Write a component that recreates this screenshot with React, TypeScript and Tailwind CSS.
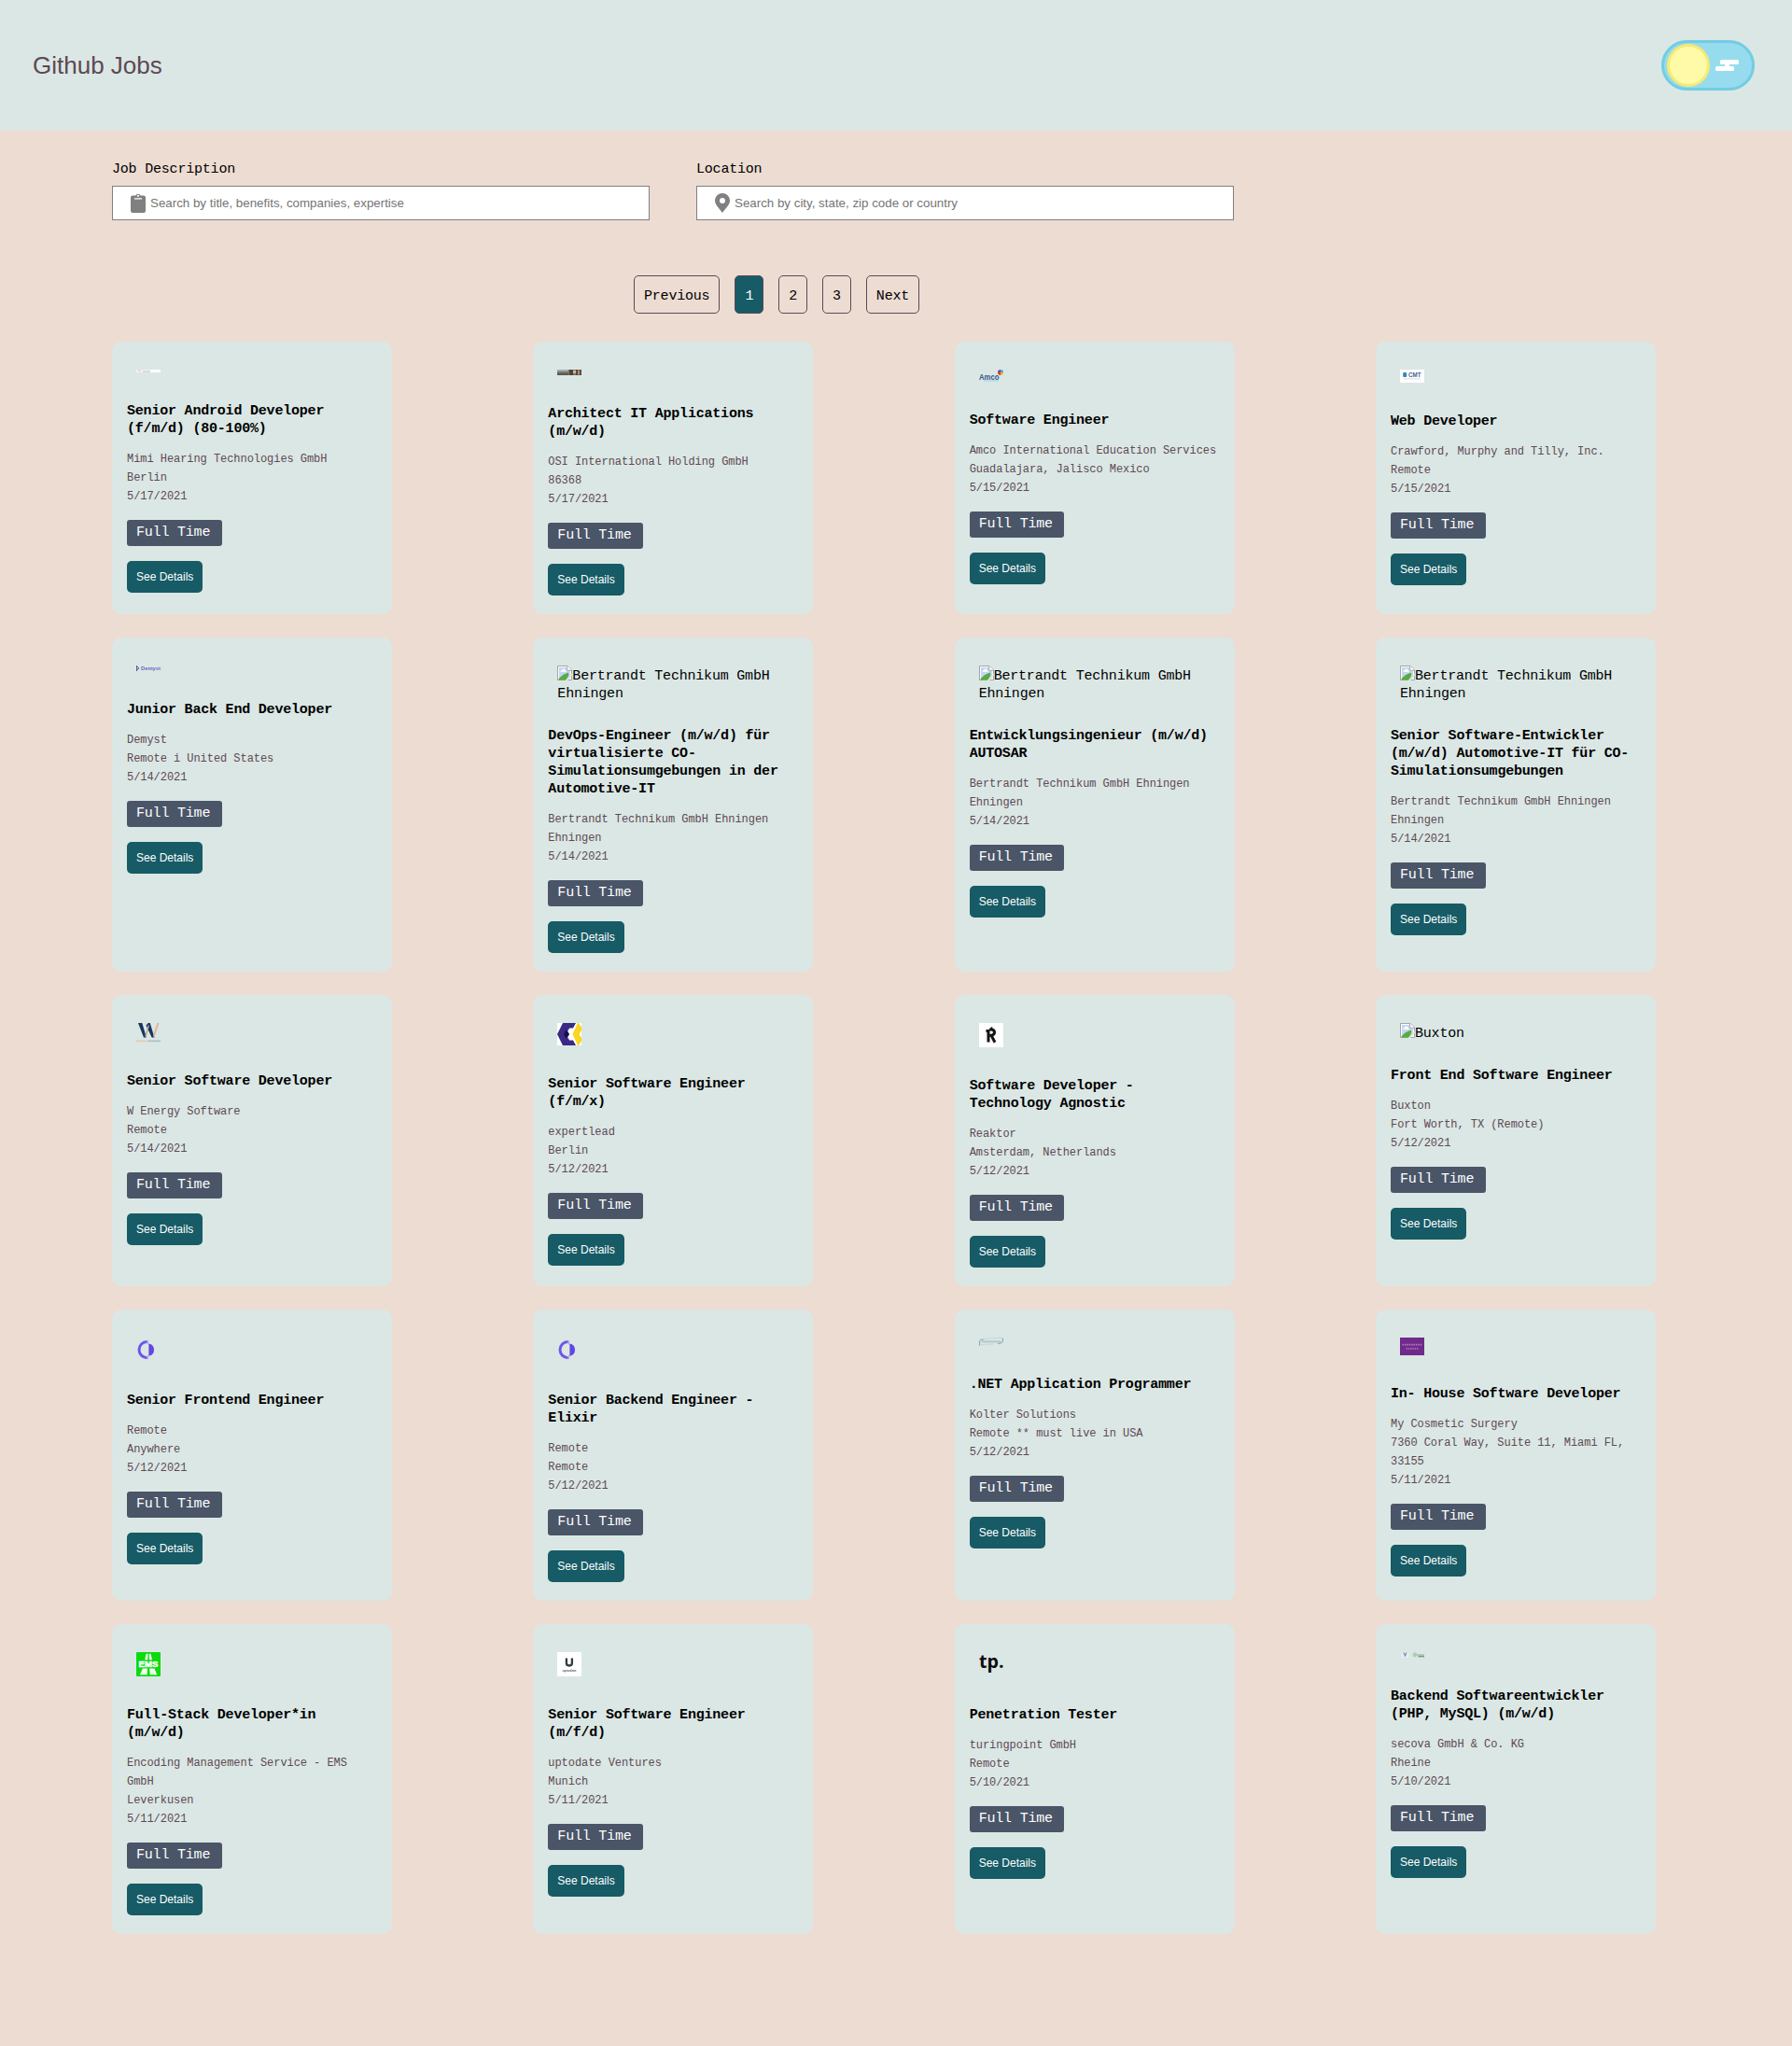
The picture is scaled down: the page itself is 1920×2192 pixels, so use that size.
import type { ReactNode } from "react";

type Job = {
  logo: ReactNode;
  title: string;
  company: string;
  place: string;
  date: string;
};

/* ---------- company logos, all 26px wide ---------- */

function Logo({ h, children }: { h: number; children: ReactNode }) {
  return (
    <svg width="26" height={h} viewBox={`0 0 26 ${h}`} className="block overflow-visible">
      {children}
    </svg>
  );
}

const mimiLogo = (
  <Logo h={3}>
    <rect width="26" height="3" fill="#f1f0f0" />
    <rect x="15" width="11" height="3" fill="#ffffff" />
    <rect x="2" width="3" height="2" fill="#dfdcdf" />
    <rect x="7" y="1" width="8" height="2" fill="#dcd9db" />
  </Logo>
);

const osiLogo = (
  <Logo h={6}>
    <rect width="26" height="6" fill="#77736b" />
    <rect width="12" height="2" fill="#a3a8a8" />
    <rect y="4" width="12" height="2" fill="#5c5a50" />
    <rect x="13" width="4" height="6" fill="#514436" />
    <rect x="17" y="1" width="3" height="3" fill="#c3b9ab" />
    <rect x="20" width="2" height="6" fill="#5e4a3a" />
    <rect x="22" y="1" width="2" height="4" fill="#b39063" />
    <rect x="24" width="2" height="6" fill="#5a5148" />
  </Logo>
);

const amcoLogo = (
  <Logo h={13}>
    <text x="0" y="10.6" fontSize="9.4" fontWeight="700" textLength="21.5" lengthAdjust="spacingAndGlyphs" fontFamily="Liberation Sans" fill="#31568c">
      Amco
    </text>
    <rect x="5" y="11.2" width="16" height="1.6" fill="#b5dbe6" />
    <path d="M23 3V0A3 3 0 0 1 26 3Z" fill="#3fa9dd" />
    <path d="M23 3H20A3 3 0 0 1 23 0Z" fill="#8f3f8f" />
    <path d="M23 3V6A3 3 0 0 1 20 3Z" fill="#e2373f" />
    <path d="M23 3H26A3 3 0 0 1 23 6Z" fill="#f6b51e" />
  </Logo>
);

const cmtLogo = (
  <Logo h={14}>
    <rect width="26" height="14" fill="#ffffff" />
    <rect x="3.2" y="3" width="4" height="5" rx="1" fill="#3b87b5" />
    <text x="9" y="8" fontSize="7" fontWeight="700" textLength="13.5" lengthAdjust="spacingAndGlyphs" fontFamily="Liberation Sans" fill="#3f6291">
      CMT
    </text>
    <rect x="3.5" y="9.4" width="19" height="1" fill="#dcdfe4" />
  </Logo>
);

const demystLogo = (
  <Logo h={6}>
    <path d="M0.5 0V6M1 1.3L3 3L1 4.7" stroke="#5a55a8" strokeWidth="1" fill="none" />
    <text x="5" y="4.9" fontSize="6" fontWeight="700" textLength="21" lengthAdjust="spacingAndGlyphs" fontFamily="Liberation Sans" fill="#6f69ba">
      Demyst
    </text>
  </Logo>
);

const wEnergyLogo = (
  <Logo h={21}>
    <path d="M2 0H6.3L10.8 15.5H8Z" fill="#15365f" />
    <path d="M10.5 2.5L12.8 0H14.8L19.4 15.5H16.6Z" fill="#15365f" />
    <path d="M9.3 14L13 1.2L13.8 3.6L10.6 15.5Z" fill="#b9a79b" />
    <path d="M18 13.5L22.6 0H24.4L19.2 15.5Z" fill="#e6ae8b" />
    <rect x="0" y="18.4" width="11" height="1.8" fill="#e6c8b6" />
    <rect x="12" y="18.4" width="14" height="1.8" fill="#b3c1c7" />
  </Logo>
);

const expertleadLogo = (
  <Logo h={24}>
    <rect width="26" height="24" fill="#ffffff" />
    <path d="M6 0H20L17 5.5L13 5.5L10 12L13 18.5H17L20 24H6L0 12Z" fill="#3a2a86" />
    <path d="M7 12L9.5 7.5L14 12L9.5 16.5Z" fill="#1c0c4e" />
    <path d="M11 7L13.5 10H17L15.5 12L17 14H13.5L11 17L13 12Z" fill="#ffffff" />
    <path d="M22 0H23L26 4.5V8L23.5 12L26 16V19.5L23 24H22L16.5 12Z" fill="#fdd41f" />
  </Logo>
);

const reaktorLogo = (
  <Logo h={26}>
    <rect width="26" height="26" fill="#ffffff" />
    <path
      d="M7.5 8.5H10V20.5M10 13.2H13.5Q16.5 12.6 16.5 10Q16.5 7 13 7L11.2 7M13.2 13.5L17 20.8"
      fill="none"
      stroke="#151515"
      strokeWidth="3"
    />
    <path d="M12 7.5L14 4.5" stroke="#151515" strokeWidth="1.6" />
  </Logo>
);

const remoteLogo = (
  <Logo h={26}>
    <path d="M11.6 4.5A8.6 8.6 0 0 0 11.6 21.7" fill="none" stroke="#6f55e8" strokeWidth="3" />
    <path d="M13.4 6.4A6.8 6.8 0 0 1 13.4 19.8Z" fill="#6246e4" />
    <path d="M12.6 3.2V7.4M12.6 18.8V23" stroke="#a596ee" strokeWidth="0.9" />
  </Logo>
);

const kolterLogo = (
  <Logo h={9}>
    <path d="M0.6 8.5V3.5Q1 2 5 2M25.4 0.5V4.5Q25 6 20 6.5" fill="none" stroke="#78a5bb" strokeWidth="1" />
    <path d="M4 1.8Q14 0.2 25 0.6M1 8Q6 6.9 16 7" fill="none" stroke="#bcd2d9" strokeWidth="0.8" />
    <rect x="2.5" y="3.5" width="21" height="1.8" fill="#b6c3c5" />
  </Logo>
);

const cosmeticLogo = (
  <Logo h={19}>
    <rect width="26" height="19" fill="#702a8c" />
    <path d="M2.500 7.7H23.5" stroke="#a87abb" strokeWidth="1.8" strokeDasharray="1.6 0.8" />
    <path d="M6.5 11.8H19.5" stroke="#a070b5" strokeWidth="1.8" strokeDasharray="1.5 0.8" />
  </Logo>
);

const emsLogo = (
  <Logo h={26}>
    <rect width="26" height="26" rx="1" fill="#0ddb10" />
    <path d="M10.6 1.8H12.5L12.3 8.2H9.2ZM13.7 1.8H15.5L17 8.2H13.9Z" fill="#f2fff2" />
    <text x="2.6" y="16" fontSize="8.4" fontWeight="700" textLength="20.8" lengthAdjust="spacingAndGlyphs" fontFamily="Liberation Sans" fill="#ffffff" stroke="#ffffff" strokeWidth="0.5">
      EMS
    </text>
    <path d="M6.8 17.4H12L11.6 24.2H4ZM14.2 17.4H19.4L22.2 24.2H14.7Z" fill="#f4fff4" />
  </Logo>
);

const uptodateLogo = (
  <Logo h={26}>
    <rect width="26" height="26" fill="#ffffff" />
    <path d="M9.9 6.4V11.8Q9.9 14.5 12.9 14.5Q15.9 14.5 15.9 11.8V6.4" fill="none" stroke="#2f3a44" strokeWidth="2.3" />
    <text x="5.4" y="20.8" fontSize="4" fontWeight="700" textLength="15.2" lengthAdjust="spacingAndGlyphs" fontFamily="Liberation Sans" fill="#63696f">
      uptodate
    </text>
  </Logo>
);

const turingpointLogo = (
  <Logo h={26}>
    <text x="0" y="17.4" fontSize="20" fontWeight="700" textLength="26.6" lengthAdjust="spacingAndGlyphs" fontFamily="Open Sans" fill="#0c0c0c">
      tp.
    </text>
  </Logo>
);

const secovaLogo = (
  <Logo h={6}>
    <rect x="1.5" y="0" width="8" height="6" fill="#e9edf1" />
    <path d="M4 0.5L5.5 4L7 0.5" fill="none" stroke="#6d8fbd" strokeWidth="1.2" />
    <circle cx="16" cy="2.8" r="2.4" fill="#a9cfae" />
    <rect x="18" y="2" width="8" height="2" fill="#b7cdb3" />
    <rect x="19.5" y="3.8" width="6.5" height="1.6" fill="#84948a" />
  </Logo>
);

/* Chrome-style missing picture followed by its alternative text */
function MissingImage({ alt, tall }: { alt: string; tall?: boolean }) {
  return (
    <div className={tall ? "h-[34px] w-[248px]" : "h-[15px] w-[248px]"}>
      <p className="relative top-[2px] text-[15px] leading-[19px] tracking-[-0.202px]">
        <svg width="16" height="16" viewBox="0 0 16 16" className="relative -top-[2px] inline-block align-top">
          <path d="M0.5 0.5H11L15.5 5V15.5H0.5Z" fill="#ffffff" stroke="#a3a3a3" />
          <path d="M2 2H10.3V5.7H14V14H2Z" fill="#c3d6f8" />
          <path d="M3.3 6.8Q3.3 5 5 5Q5.4 3.4 6.8 3.4Q8.4 3.4 8.6 5.2Q9.8 5.4 9.8 6.8Z" fill="#ffffff" />
          <path d="M1 15.5Q3 11.5 8.3 9L11.8 7.6Q13.5 10 9.6 15.5Z" fill="#5aac3c" />
          <path d="M8.6 15.9L15.9 8.6V11L11.2 15.9Z" fill="#dbe7e4" />
          <path d="M10.7 0.6V5.3H15.4" fill="#ffffff" stroke="#a3a3a3" />
        </svg>
        {alt}
      </p>
    </div>
  );
}

const bertrandt = <MissingImage alt="Bertrandt Technikum GmbH Ehningen" tall />;

const jobs: Job[] = [
  { logo: mimiLogo, title: "Senior Android Developer (f/m/d) (80-100%)", company: "Mimi Hearing Technologies GmbH", place: "Berlin", date: "5/17/2021" },
  { logo: osiLogo, title: "Architect IT Applications (m/w/d)", company: "OSI International Holding GmbH", place: "86368", date: "5/17/2021" },
  { logo: amcoLogo, title: "Software Engineer", company: "Amco International Education Services", place: "Guadalajara, Jalisco Mexico", date: "5/15/2021" },
  { logo: cmtLogo, title: "Web Developer", company: "Crawford, Murphy and Tilly, Inc.", place: "Remote", date: "5/15/2021" },
  { logo: demystLogo, title: "Junior Back End Developer", company: "Demyst", place: "Remote i United States", date: "5/14/2021" },
  { logo: bertrandt, title: "DevOps-Engineer (m/w/d) für virtualisierte CO-Simulationsumgebungen in der Automotive-IT", company: "Bertrandt Technikum GmbH Ehningen", place: "Ehningen", date: "5/14/2021" },
  { logo: bertrandt, title: "Entwicklungsingenieur (m/w/d) AUTOSAR", company: "Bertrandt Technikum GmbH Ehningen", place: "Ehningen", date: "5/14/2021" },
  { logo: bertrandt, title: "Senior Software-Entwickler (m/w/d) Automotive-IT für CO-Simulationsumgebungen", company: "Bertrandt Technikum GmbH Ehningen", place: "Ehningen", date: "5/14/2021" },
  { logo: wEnergyLogo, title: "Senior Software Developer", company: "W Energy Software", place: "Remote", date: "5/14/2021" },
  { logo: expertleadLogo, title: "Senior Software Engineer (f/m/x)", company: "expertlead", place: "Berlin", date: "5/12/2021" },
  { logo: reaktorLogo, title: "Software Developer - Technology Agnostic", company: "Reaktor", place: "Amsterdam, Netherlands", date: "5/12/2021" },
  { logo: <MissingImage alt="Buxton" />, title: "Front End Software Engineer", company: "Buxton", place: "Fort Worth, TX (Remote)", date: "5/12/2021" },
  { logo: remoteLogo, title: "Senior Frontend Engineer", company: "Remote", place: "Anywhere", date: "5/12/2021" },
  { logo: remoteLogo, title: "Senior Backend Engineer - Elixir", company: "Remote", place: "Remote", date: "5/12/2021" },
  { logo: kolterLogo, title: ".NET Application Programmer", company: "Kolter Solutions", place: "Remote ** must live in USA", date: "5/12/2021" },
  { logo: cosmeticLogo, title: "In- House Software Developer", company: "My Cosmetic Surgery", place: "7360 Coral Way, Suite 11, Miami FL, 33155", date: "5/11/2021" },
  { logo: emsLogo, title: "Full-Stack Developer*in (m/w/d)", company: "Encoding Management Service - EMS GmbH", place: "Leverkusen", date: "5/11/2021" },
  { logo: uptodateLogo, title: "Senior Software Engineer (m/f/d)", company: "uptodate Ventures", place: "Munich", date: "5/11/2021" },
  { logo: turingpointLogo, title: "Penetration Tester", company: "turingpoint GmbH", place: "Remote", date: "5/10/2021" },
  { logo: secovaLogo, title: "Backend Softwareentwickler (PHP, MySQL) (m/w/d)", company: "secova GmbH & Co. KG", place: "Rheine", date: "5/10/2021" },
];

function JobCard({ job }: { job: Job }) {
  return (
    <article className="flex flex-col items-start rounded-[10px] bg-[#dbe7e4] px-4 pt-[30px] pb-5">
      <div className="ml-2.5">{job.logo}</div>
      <h2 className="mt-8 text-[15px] leading-[19px] font-bold tracking-[-0.202px] text-black">{job.title}</h2>
      <div className="mt-[13px] text-[12px] leading-5 tracking-[-0.054px] text-[#5d4954]">
        <p>{job.company}</p>
        <p>{job.place}</p>
        <p>{job.date}</p>
      </div>
      <span className="mt-[15px] h-7 w-[101.6px] rounded-[3px] bg-[#4a5568] pl-2.5 text-[15px] leading-[28px] tracking-[-0.202px] text-white">
        Full Time
      </span>
      <button className="mt-4 h-[34px] w-[81.4px] rounded-[5px] bg-[#165b65] font-['Liberation_Sans',sans-serif] text-[12px] whitespace-nowrap text-white">
        See Details
      </button>
    </article>
  );
}

function SearchField({ label, placeholder, icon }: { label: string; placeholder: string; icon: ReactNode }) {
  return (
    <label className="flex w-[576px] flex-col">
      <span className="pt-px text-[15px] leading-[19px] tracking-[-0.202px] text-black">{label}</span>
      <span className="mt-2 flex h-[37px] items-center border border-[#808080] bg-white pl-[19px]">
        {icon}
        <input
          className="ml-[5px] h-full flex-1 font-['Liberation_Sans',sans-serif] text-[13.333px] outline-none placeholder:text-[#757575]"
          placeholder={placeholder}
        />
      </span>
    </label>
  );
}

const clipboardIcon = (
  <svg width="16" height="21" viewBox="0 0 16 21">
    <path
      fillRule="evenodd"
      fill="#808080"
      d="M2 2.6H5.4A2.7 2.7 0 0 1 10.6 2.6H14A2 2 0 0 1 16 4.6V19A2 2 0 0 1 14 21H2A2 2 0 0 1 0 19V4.6A2 2 0 0 1 2 2.6ZM8 1.7A1.1 1.1 0 1 0 8 3.9A1.1 1.1 0 1 0 8 1.7ZM4 5.2V6.6H12V5.2Z"
    />
  </svg>
);

const pinIcon = (
  <svg width="16" height="21" viewBox="0 0 16 21">
    <path
      fillRule="evenodd"
      fill="#808080"
      d="M8 0A8 8 0 0 1 16 8C16 12 12 15.5 8 21C4 15.5 0 12 0 8A8 8 0 0 1 8 0ZM8 5A3 3 0 1 0 8 11A3 3 0 1 0 8 5Z"
    />
  </svg>
);

function ThemeToggle() {
  return (
    <button aria-label="Toggle theme" className="flex h-[54px] w-[100px] items-center rounded-full border-[3px] border-[#72cce3] bg-[#96dcee] pl-[3px]">
      <span className="h-[46px] w-[46px] rounded-full border-[3px] border-[#f5eb71] bg-[#fffaa8]" />
      <svg width="25" height="12" viewBox="0 0 25 12" className="ml-1.5" fill="#ffffff">
        <rect x="5" y="0" width="20" height="5" rx="1.5" />
        <rect x="10" y="4" width="5" height="4" />
        <rect x="0" y="7" width="20" height="5" rx="1.5" />
      </svg>
    </button>
  );
}

const pages = ["Previous", "1", "2", "3", "Next"];

export default function App() {
  return (
    <div className="min-h-[2192px] w-[1920px] bg-[#eddcd2] font-['Liberation_Mono',monospace]">
      <header className="flex h-[140px] items-center justify-between bg-[#dbe7e4] pr-10 pl-[35px]">
        <h1 className="font-['Liberation_Sans',sans-serif] text-[26px] leading-none text-[#5d4954]">Github Jobs</h1>
        <ThemeToggle />
      </header>

      <main className="px-[120px] pt-[31px]">
        <form className="flex gap-[50px]">
          <SearchField label="Job Description" placeholder="Search by title, benefits, companies, expertise" icon={clipboardIcon} />
          <SearchField label="Location" placeholder="Search by city, state, zip code or country" icon={pinIcon} />
        </form>

        <nav className="mt-[59px] ml-[559px] flex gap-4">
          {pages.map((p) => (
            <button
              key={p}
              className={
                p === "1"
                  ? "h-[41px] rounded-[5px] border border-[#5d4954] bg-[#165b65] px-2.5 pt-[5px] text-[15px] tracking-[-0.202px] text-white"
                  : "h-[41px] rounded-[5px] border border-[#5d4954] px-2.5 pt-[5px] text-[15px] tracking-[-0.202px] text-black"
              }
            >
              {p}
            </button>
          ))}
        </nav>

        <section className="mt-[30px] grid grid-cols-[repeat(4,300px)] gap-x-[151.33px] gap-y-[25px]">
          {jobs.map((job, i) => (
            <JobCard key={i} job={job} />
          ))}
        </section>
      </main>
    </div>
  );
}
